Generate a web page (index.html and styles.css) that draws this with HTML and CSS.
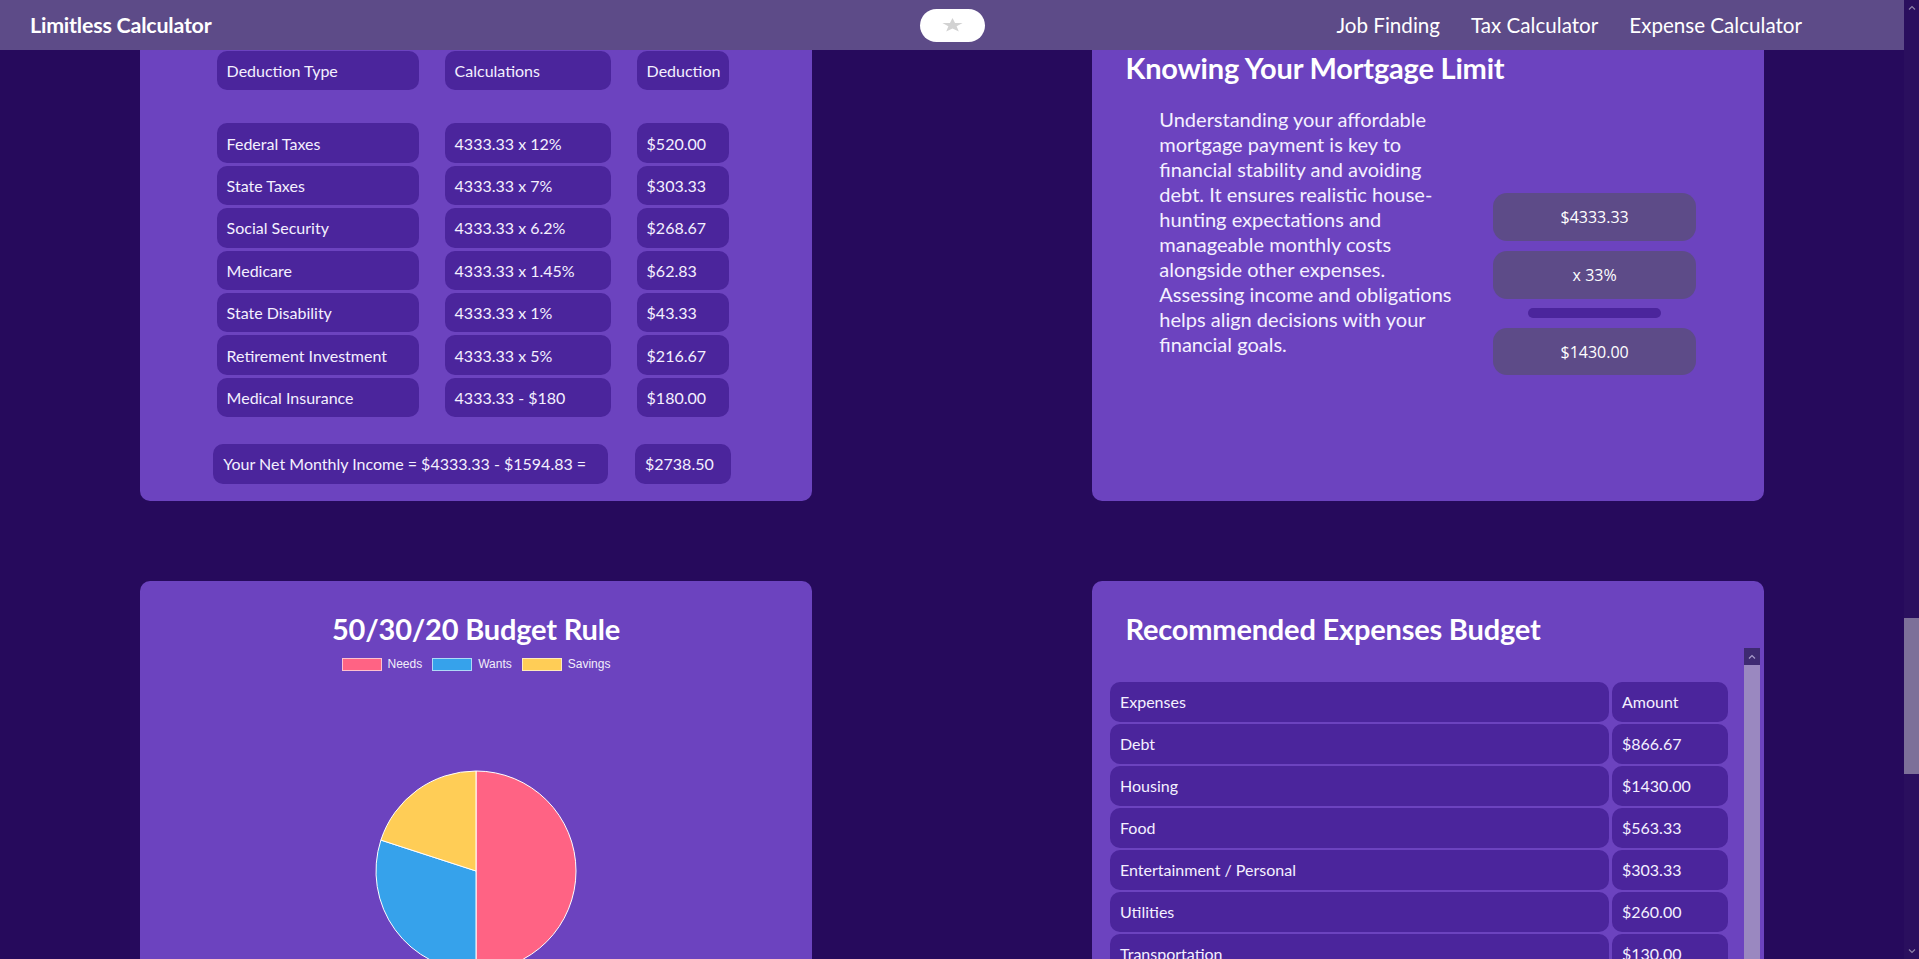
FILE: index.html
```html
<!DOCTYPE html>
<html lang="en">
<head>
<meta charset="utf-8">
<title>Limitless Calculator</title>
<link rel="stylesheet" href="styles.css">
</head>
<body>
<div class="page">
  <div class="main">
    <header class="topbar">
      <div class="brand">Limitless Calculator</div>
      <button class="fav" aria-label="Favorite">
        <svg class="star" width="21" height="14" viewBox="0 0 24 23" preserveAspectRatio="none"><polygon points="12,0 14.9,8.2 23.6,8.4 16.7,13.7 19.2,22.1 12,17.1 4.8,22.1 7.3,13.7 0.4,8.4 9.1,8.2" fill="#d2d2d2"/></svg>
      </button>
      <nav class="links">
        <a href="#">Job Finding</a>
        <a href="#">Tax Calculator</a>
        <a href="#">Expense Calculator</a>
      </nav>
    </header>

    <section class="row row-top">
      <div class="card card-cut deductions">
        <div class="ded-grid">
          <div class="cell">Deduction Type</div><div class="cell">Calculations</div><div class="cell">Deduction</div>
          <div class="spacer"></div>
          <div class="cell">Federal Taxes</div><div class="cell">4333.33 x 12%</div><div class="cell">$520.00</div>
          <div class="cell">State Taxes</div><div class="cell">4333.33 x 7%</div><div class="cell">$303.33</div>
          <div class="cell">Social Security</div><div class="cell">4333.33 x 6.2%</div><div class="cell">$268.67</div>
          <div class="cell">Medicare</div><div class="cell">4333.33 x 1.45%</div><div class="cell">$62.83</div>
          <div class="cell">State Disability</div><div class="cell">4333.33 x 1%</div><div class="cell">$43.33</div>
          <div class="cell">Retirement Investment</div><div class="cell">4333.33 x 5%</div><div class="cell">$216.67</div>
          <div class="cell">Medical Insurance</div><div class="cell">4333.33 - $180</div><div class="cell">$180.00</div>
        </div>
        <div class="net-grid">
          <div class="cell">Your Net Monthly Income = $4333.33 - $1594.83 =</div>
          <div class="cell">$2738.50</div>
        </div>
      </div>

      <div class="card card-cut mortgage">
        <h2 class="card-title">Knowing Your Mortgage Limit</h2>
        <div class="mortgage-body">
          <p class="mortgage-text">Understanding your affordable mortgage payment is key to financial stability and avoiding debt. It ensures realistic house-hunting expectations and manageable monthly costs alongside other expenses. Assessing income and obligations helps align decisions with your financial goals.</p>
          <div class="mortgage-calc">
            <div class="calc-box">$4333.33</div>
            <div class="calc-box">x 33%</div>
            <div class="calc-bar"></div>
            <div class="calc-box">$1430.00</div>
          </div>
        </div>
      </div>
    </section>

    <section class="row row-bottom">
      <div class="card budget">
        <h2 class="card-title">50/30/20 Budget Rule</h2>
        <div class="legend">
          <div class="legend-item"><span class="swatch needs"></span><span>Needs</span></div>
          <div class="legend-item"><span class="swatch wants"></span><span>Wants</span></div>
          <div class="legend-item"><span class="swatch savings"></span><span>Savings</span></div>
        </div>
        <svg class="pie" width="202" height="202" viewBox="0 0 202 202">
          <path d="M101 101 L101 1 A100 100 0 0 1 101 201 Z" fill="#ff6384" stroke="#fff" stroke-width="1"/>
          <path d="M101 101 L101 201 A100 100 0 0 1 5.89 70.1 Z" fill="#36a2eb" stroke="#fff" stroke-width="1"/>
          <path d="M101 101 L5.89 70.1 A100 100 0 0 1 101 1 Z" fill="#ffcd56" stroke="#fff" stroke-width="1"/>
        </svg>
      </div>

      <div class="card expenses">
        <h2 class="card-title">Recommended Expenses Budget</h2>
        <div class="exp-wrap">
          <div class="exp-grid">
            <div class="cell">Expenses</div><div class="cell">Amount</div>
            <div class="cell">Debt</div><div class="cell">$866.67</div>
            <div class="cell">Housing</div><div class="cell">$1430.00</div>
            <div class="cell">Food</div><div class="cell">$563.33</div>
            <div class="cell">Entertainment / Personal</div><div class="cell">$303.33</div>
            <div class="cell">Utilities</div><div class="cell">$260.00</div>
            <div class="cell">Transportation</div><div class="cell">$130.00</div>
          </div>
          <div class="mini-scroll">
            <div class="mini-btn"><svg width="8" height="5" viewBox="0 0 8 5"><polyline points="1,4.5 4,1.5 7,4.5" fill="none" stroke="#a99ccc" stroke-width="1.2"/></svg></div>
            <div class="mini-track"></div>
          </div>
        </div>
      </div>
    </section>
  </div>

  <div class="page-scroll">
    <div class="ps-arrow"><svg width="8" height="5" viewBox="0 0 8 5"><polyline points="1,4.5 4,1.5 7,4.5" fill="none" stroke="#8d82a8" stroke-width="1.2"/></svg></div>
    <div class="ps-track"><div class="ps-thumb"></div></div>
    <div class="ps-arrow"><svg width="8" height="5" viewBox="0 0 8 5"><polyline points="1,0.5 4,3.5 7,0.5" fill="none" stroke="#8d82a8" stroke-width="1.2"/></svg></div>
  </div>
</div>
</body>
</html>
```

FILE: styles.css
```css
html, body {
  margin: 0;
  padding: 0;
  height: 100%;
}

body {
  background: #260a5c;
  color: #f4f0ff;
  font-family: Lato, "Noto Sans", sans-serif;
  overflow: hidden;
}

.page {
  display: flex;
  height: 959px;
}

.main {
  flex: 1;
  min-width: 0;
  overflow: hidden;
}

/* top bar */
.topbar {
  height: 50px;
  background: #5d4b88;
  display: grid;
  grid-template-columns: 1fr auto 1fr;
  align-items: center;
}

.brand {
  padding-left: 30px;
  font-weight: 700;
  font-size: 21.4px;
  color: #ffffff;
  letter-spacing: -0.2px;
}

.fav {
  width: 65px;
  height: 33px;
  border: 0;
  padding: 0;
  border-radius: 17px;
  background: #ffffff;
  display: flex;
  align-items: center;
  justify-content: center;
}

.links {
  justify-self: end;
  display: flex;
  gap: 31px;
  padding-right: 102px;
  font-size: 20.6px;
}

.links a {
  color: #ffffff;
  text-decoration: none;
}

/* rows and cards */
.row {
  display: flex;
  justify-content: space-around;
  align-items: stretch;
}

.row-top {
  margin-bottom: 80.5px;
}

.card {
  width: 672px;
  box-sizing: border-box;
  background: #6c43bf;
  border-radius: 10px;
}

.card-cut {
  border-radius: 0 0 10px 10px;
}

.card-title {
  margin: 0;
  font-size: 29px;
  line-height: 34px;
  font-weight: 700;
  color: #ffffff;
  letter-spacing: -0.2px;
}

.cell {
  background: #4b259c;
  border-radius: 10px;
  display: flex;
  align-items: center;
  padding-left: 10px;
  font-size: 16px;
  color: #f4f0ff;
  white-space: nowrap;
}

/* deductions */
.deductions {
  padding: 1px 0 17px 0;
}

.ded-grid {
  display: grid;
  grid-template-columns: 202px 166px 92.7px;
  grid-template-rows: 39.4px 27px repeat(7, 39.4px);
  column-gap: 26px;
  row-gap: 3px;
  margin-left: 76.6px;
}

.ded-grid .spacer {
  grid-column: 1 / -1;
}

.net-grid {
  display: grid;
  grid-template-columns: 394.7px 96px;
  grid-auto-rows: 39.4px;
  column-gap: 27px;
  margin: 27px 0 0 73.3px;
}

/* mortgage */
.mortgage {
  padding: 0.5px 0 0 33.5px;
}

.mortgage-body {
  display: flex;
  align-items: flex-start;
  margin-top: 22px;
  padding-left: 33.8px;
}

.mortgage-text {
  margin: 0;
  width: 300px;
  font-size: 20px;
  line-height: 25px;
  color: #f4f0ff;
}

.mortgage-calc {
  margin: 86.8px 0 0 34px;
  width: 202.7px;
  display: flex;
  flex-direction: column;
  align-items: center;
}

.calc-box {
  width: 100%;
  height: 47.7px;
  border-radius: 14px;
  background: #5d4b88;
  display: flex;
  align-items: center;
  justify-content: center;
  font-family: "Open Sans", Lato, sans-serif;
  font-size: 16px;
  color: #ffffff;
}

.calc-box + .calc-box {
  margin-top: 10px;
}

.calc-bar {
  width: 133px;
  height: 10px;
  border-radius: 5px;
  background: #4b259c;
  margin: 9px 0 10px;
}

/* budget pie */
.budget {
  min-height: 450px;
  padding-top: 30.5px;
  text-align: center;
}

.legend {
  display: flex;
  justify-content: center;
  gap: 10px;
  margin-top: 12.2px;
  height: 13px;
}

.legend-item {
  display: flex;
  align-items: center;
  gap: 6px;
  font-family: "Liberation Sans", Arial, sans-serif;
  font-size: 12px;
  line-height: 13px;
  color: #f2eefa;
}

.swatch {
  width: 40px;
  height: 13px;
  box-sizing: border-box;
  border: 1.5px solid rgba(255, 255, 255, 0.6);
}

.swatch.needs { background: #ff6384; }
.swatch.wants { background: #36a2eb; }
.swatch.savings { background: #ffcd56; }

.pie {
  display: block;
  margin: 99.3px auto 0;
}

/* expenses */
.expenses {
  min-height: 450px;
  padding-top: 31px;
}

.expenses .card-title {
  padding-left: 33.5px;
}

.exp-wrap {
  display: flex;
  margin: 2px 4px 0 15px;
  height: 400px;
}

.exp-grid {
  flex: 1;
  display: grid;
  grid-template-columns: 499.3px 115.7px;
  grid-auto-rows: 39.5px;
  column-gap: 2.7px;
  row-gap: 2.5px;
  align-content: start;
  padding: 34px 0 0 3px;
}

.mini-scroll {
  width: 16.5px;
  display: flex;
  flex-direction: column;
}

.mini-btn {
  height: 16.7px;
  background: #3e2a72;
  display: flex;
  align-items: center;
  justify-content: center;
}

.mini-track {
  flex: 1;
  background: #9a88c0;
}

/* page scrollbar */
.page-scroll {
  width: 15px;
  background: #2a0f5e;
  display: flex;
  flex-direction: column;
}

.ps-arrow {
  height: 15px;
  display: flex;
  align-items: center;
  justify-content: center;
}

.ps-track {
  flex: 1;
}

.ps-thumb {
  margin-top: 603px;
  height: 155.5px;
  background: #7d7099;
}
```
